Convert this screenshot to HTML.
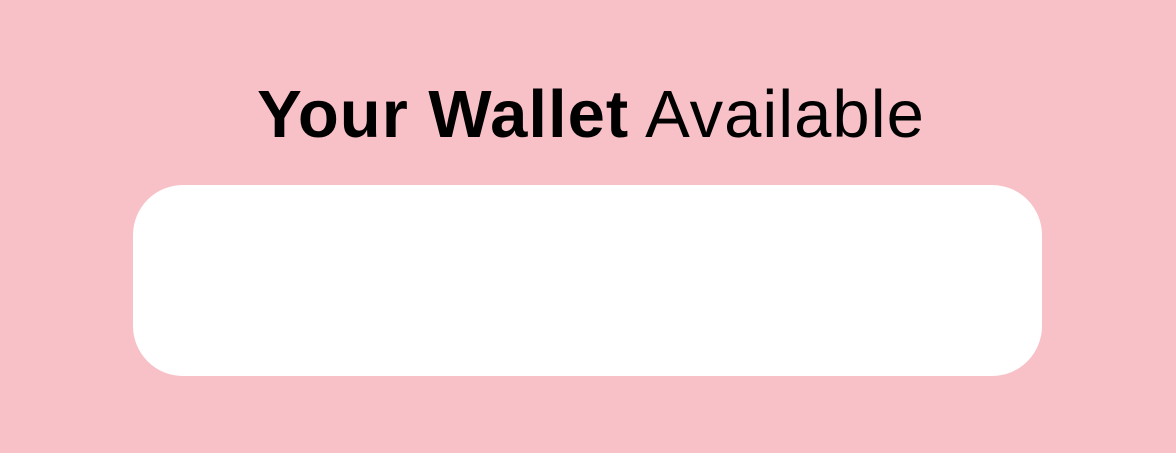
<!DOCTYPE html>
<html><head><style>
html,body{margin:0;padding:0;width:1176px;height:455px;background:#f8c0c7;overflow:hidden}
h1{position:absolute;left:3px;width:1176px;top:75px;margin:0;text-align:center;font-family:"Liberation Sans",sans-serif;font-size:67px;line-height:80px;color:#000;font-weight:400;letter-spacing:1px}
h1 b{font-weight:700}
.box{position:absolute;left:133px;top:185px;width:909px;height:191px;background:#fff;border-radius:50px}
.line{position:absolute;left:0;top:453px;width:1176px;height:2px;background:#fff}
</style></head><body>
<h1><b>Your Wallet</b> Available</h1>
<div class="box"></div>
<div class="line"></div>
</body></html>
